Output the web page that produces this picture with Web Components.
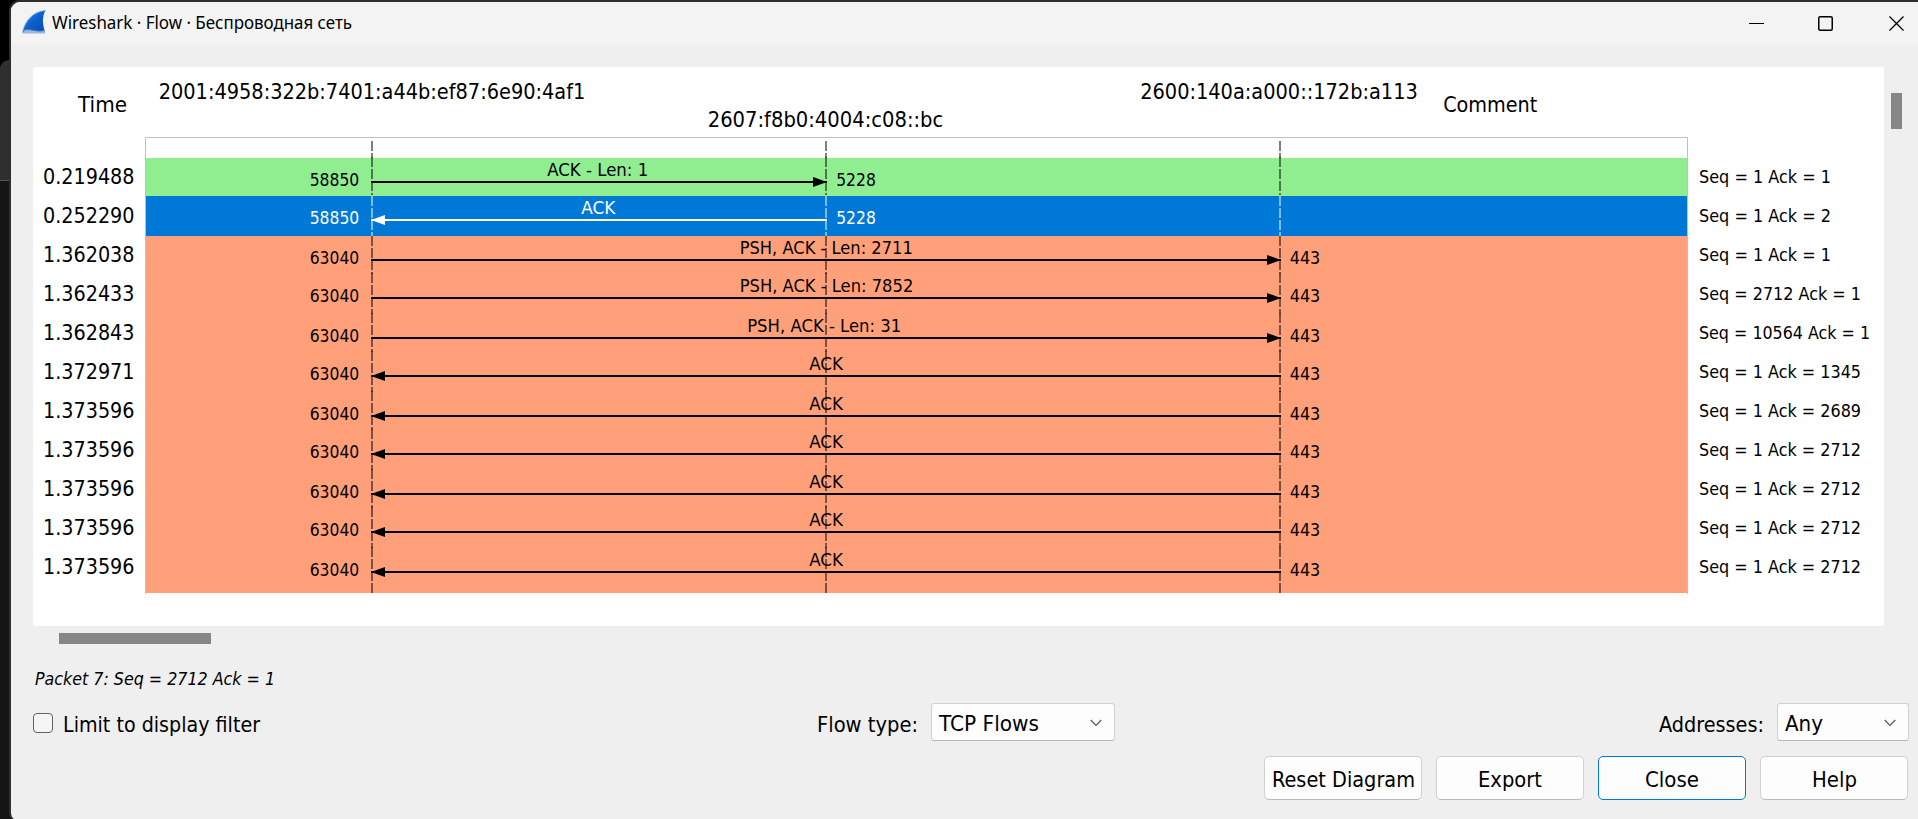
<!DOCTYPE html>
<html lang="ru"><head><meta charset="utf-8"><title>Wireshark · Flow</title>
<style>
html,body{margin:0;height:100%;overflow:hidden;background:#000}
body{font-family:"DejaVu Sans Condensed","DejaVu Sans",sans-serif;font-size:22px;color:#000}
</style></head><body><flow-window></flow-window>
<script>
const define=(name,html,init)=>customElements.define(name,class extends HTMLElement{
  connectedCallback(){ if(this.shadowRoot)return; const r=this.attachShadow({mode:'open'}); r.innerHTML=typeof html==='function'?html(this):html; if(init)init(this,r); }
});

/* Text squeezed or stretched horizontally to a fixed width. */
define('fit-text','<style>:host{display:block;flex:none;white-space:nowrap;line-height:39px;height:39px}span{display:inline-block;transform-origin:0 50%}</style><span><slot></slot></span>',(el,r)=>{
  const w=+el.getAttribute('w'); el.style.width=w+'px';
  const s=r.querySelector('span'); s.style.transform=`scaleX(${w/s.getBoundingClientRect().width})`;
});

define('title-bar',`<style>
:host{display:flex;height:43px;background:#f3f3f3;align-items:center;box-sizing:border-box;padding-left:11px;border-top-left-radius:9px}
.logo{width:24px;height:24px;margin-top:-3px;margin-right:6px}
fit-text{font:18px "Noto Sans",sans-serif;line-height:39px;margin-top:-3px;flex:1}
.btns{margin-left:auto;display:flex;gap:54px;margin-right:13px}
.btns svg{width:16px;height:16px;margin-top:1px;fill:none;stroke:#000}
.btns svg:nth-child(2){margin:1px 1px 0 -1px}
</style>
<svg class="logo" viewBox="0 0 24 24"><defs><linearGradient id="g" x1="0" y1="0" x2="1" y2="1"><stop offset="0" stop-color="#4aa0ee"/><stop offset=".45" stop-color="#0f62d0"/><stop offset="1" stop-color="#0546ac"/></linearGradient></defs>
<path d="M.5 22.500C3.500 10.500 11 1.500 23.500 0.500C20 6.500 20.500 14 23 22.500Z" fill="url(#g)"/><path d="M.5 22.500C2.500 10.500 11 1.500 23.500 .5" fill="none" stroke="#6cb2ea" stroke-width=".8"/><path d="M.3 23.500L2.500 20C8 18 16 23 22.300 20.200L23 23.500Z" fill="#9fb6d6"/><path d="M2.500 20C8 18 16 23 22.300 20.200" stroke="#3d78c4" fill="none"/></svg>
<fit-text w="300">Wireshark · Flow · Беспроводная сеть</fit-text>
<div class="btns"><svg viewBox="0 0 16 16"><path d="M0 7.500H15"/></svg><svg viewBox="0 0 16 16"><rect x=".75" y=".75" width="13.500" height="13.500" rx="1.500" stroke-width="1.500"/></svg><svg viewBox="0 0 16 16"><path d="M.5 .5L14.500 14.500M14.500 .5L.5 14.500" stroke-width="1.300"/></svg></div>`);

const rows=[
 ['0.219488','Seq = 1 Ack = 1',131,38],['0.252290','Seq = 1 Ack = 2',131,40],['1.362038','Seq = 1 Ack = 1',131,38],
 ['1.362433','Seq = 2712 Ack = 1',161,40],['1.362843','Seq = 10564 Ack = 1',170,38],['1.372971','Seq = 1 Ack = 1345',161,40],
 ['1.373596','Seq = 1 Ack = 2689',161,38],['1.373596','Seq = 1 Ack = 2712',161,40],['1.373596','Seq = 1 Ack = 2712',161,38],
 ['1.373596','Seq = 1 Ack = 2712',161,40],['1.373596','Seq = 1 Ack = 2712',161,45]];

define('time-column',`<style>:host{display:block;width:112px;flex:none}.head{height:90px;box-sizing:border-box;padding:18px 0 0 45px}.row{padding-left:10px}</style>
<div class="head"><fit-text w="49">Time</fit-text></div>`+rows.map(r=>`<div class="row"><fit-text w="91.5">${r[0]}</fit-text></div>`).join(''));

define('comment-column',`<style>:host{display:block;font-size:18px;padding:90px 0 0 11px;flex:none}</style>`+rows.map(r=>`<fit-text w="${r[2]+1}">${r[1]}</fit-text>`).join(''));

/* Sequence diagram: hosts, lifelines and one arrow per packet. */
define('sequence-chart',()=>{
 const A=372,B=826,C=1280;
 const t=(s,x0,x1,y,z=18,c='#000')=>`<text x="${x0-.8}" y="${y}" font-size="${z}" fill="${c}" textLength="${x1-x0+1.6}" lengthAdjust="spacingAndGlyphs">${s}</text>`;
 const dash=(y0,y1,c)=>[A,B,C].map(x=>`<path d="M${x} ${y0}V${y1}" stroke="${c}" stroke-opacity=".5" stroke-width="2" stroke-dasharray="10 2"/>`).join('');
 let s=t('2001:4958:322b:7401:a44b:ef87:6e90:4af1',159.500,584.500,99,22)+t('2607:f8b0:4004:c08::bc',708.500,942.500,127,22)+t('2600:140a:a000::172b:a113',1141,1417,99,22)+t('Comment',1444,1536.500,112,22);
 s+='<path d="M145.500 594V137.500H1687.500V594" fill="none" stroke="#c0c0c0"/>'+dash(141,158,'#000');
 const lab=[['ACK - Len: 1',548,647.500],['ACK',582,614.500],['PSH, ACK - Len: 2711',740.500,912],['PSH, ACK - Len: 7852',740.500,912.500],['PSH, ACK - Len: 31',748,900.500]];
 let y=158, over='';
 rows.forEach((r,i)=>{
  const h=r[3],L=y+24,c=i==1?'#fff':'#000',fill=i==0?'#90ee90':i==1?'#0078d7':'#ffa07a',end=i<2?B:C;
  s+=`<rect x="146" y="${y}" width="1541" height="${h}" fill="${fill}"/>`;
  over+=dash(i==1||i==2?y:y-1,i==0?195:i==1?y+h:i==10?593:y+h,c);
  over+=`<path d="M371 ${L}H${end+1}" stroke="${c}" stroke-width="2"/>`;
  const right=i==0||(i>1&&i<5);
  over+=right?`<path d="M${end+1} ${L}l-14 -5v10z" fill="${c}"/>`:`<path d="M371 ${L}l14 -5v10z" fill="${c}"/>`;
  over+=t(i<2?'58850':'63040',310.500,358.500,L+4,18,c);
  over+=i<2?t('5228',837,875,L+4,18,c):t('443',1290.500,1319.500,L+4,18,c);
  const l=lab[i]||['ACK',810,842.300];
  over+=t(l[0],l[1],l[2],L-6,18,c);
  y+=h;
 });
 return `<style>:host{display:block;width:1543px;height:559px;flex:none}svg{display:block}</style><svg width="1543" height="559" viewBox="145 67 1543 559">${s}${over}</svg>`;
});

define('flow-panel',`<style>
:host{display:grid;grid-template-columns:1851px 23px;grid-template-rows:559px 24px;margin-left:22px}
.paper{display:flex;background:#fff;border-radius:2px}
.v{width:11px;height:36px;background:#868686;margin:26px 0 0 7px}
.h{width:152px;height:11px;background:#868686;margin:7px 0 0 26px}
</style><div class="paper"><time-column></time-column><sequence-chart></sequence-chart><comment-column></comment-column></div><div class="v"></div><div class="h"></div>`);

define('combo-box',`<style>
:host{display:flex;box-sizing:border-box;height:38px;background:#fdfdfd;border:1px solid #d0d0d0;border-bottom-color:#b8b8b8;border-radius:3px;padding:0 12px 0 7px;justify-content:space-between;align-items:center}
svg{width:12px;height:8px;fill:none;stroke:#555;stroke-width:1.200;margin-top:1px}
::slotted(*){margin-top:2px}
</style><slot></slot><svg viewBox="0 0 12 8"><path d="M.7 1L6 6.400L11.300 1"/></svg>`);

define('push-button',`<style>
:host{display:flex;box-sizing:border-box;width:148px;height:44px;background:#fdfdfd;border:1px solid #d0d0d0;border-bottom-color:#b8b8b8;border-radius:5px;justify-content:center;align-items:center}
:host([default]){border-color:#0078d4}
:host([wide]){width:158px}
::slotted(*){margin-top:3px}
</style><slot></slot>`);

define('check-box',`<style>:host{display:flex;align-items:center}i{width:20px;height:20px;box-sizing:border-box;border:1px solid #626262;border-radius:4px;background:#f5f5f5;margin-right:10px;margin-top:2px}</style><i></i><slot></slot>`);

define('flow-window',`<style>
:host{display:flex;width:1918px;height:819px;overflow:hidden;background:#2d2a2b}
.desk{width:9px;flex:none;background:linear-gradient(#000 0 180px,#555 180px 181px,#141414 181px)}
.desk i{display:block;height:120px;margin-top:60px;background:#2f2f2f;border-top-left-radius:9px}
.outer{background:linear-gradient(#000 0 180px,#141414 180px);flex:none;height:819px;width:1909px}
.edge{width:1909px;height:823px;border:2px solid #2f2d2e;border-right:0;border-top-left-radius:11px;border-bottom-left-radius:10px;box-sizing:border-box;background:#efefef}
flow-panel{margin-top:22px}
.hint{font-size:18px;font-style:italic;margin:9px 0 0 24px;height:39px}
.opts{display:flex;align-items:center;height:38px;padding-left:22px;margin-top:5px}
.opts>fit-text{margin-top:5px}
.btns{display:flex;gap:14px;justify-content:flex-end;padding-right:10px;margin-top:15px}
.lbl{margin-top:5px}.one{width:184px}.two{width:132px}
</style>
<div class="desk"><i></i></div><div class="outer"><div class="edge">
<title-bar></title-bar>
<flow-panel></flow-panel>
<div class="hint"><fit-text w="240">Packet 7: Seq = 2712 Ack = 1</fit-text></div>
<div class="opts"><check-box><fit-text class="lbl" w="197">Limit to display filter</fit-text></check-box>
<fit-text w="101" style="margin-left:557px">Flow type:</fit-text><combo-box class="one" style="margin-left:13px"><fit-text w="100">TCP Flows</fit-text></combo-box>
<fit-text w="105" style="margin-left:544px">Addresses:</fit-text><combo-box class="two" style="margin-left:13px"><fit-text w="38">Any</fit-text></combo-box></div>
<div class="btns"><push-button wide><fit-text w="143">Reset Diagram</fit-text></push-button><push-button><fit-text w="64">Export</fit-text></push-button><push-button default><fit-text w="54">Close</fit-text></push-button><push-button><fit-text w="45">Help</fit-text></push-button></div>
</div></div>`);
</script></body></html>
